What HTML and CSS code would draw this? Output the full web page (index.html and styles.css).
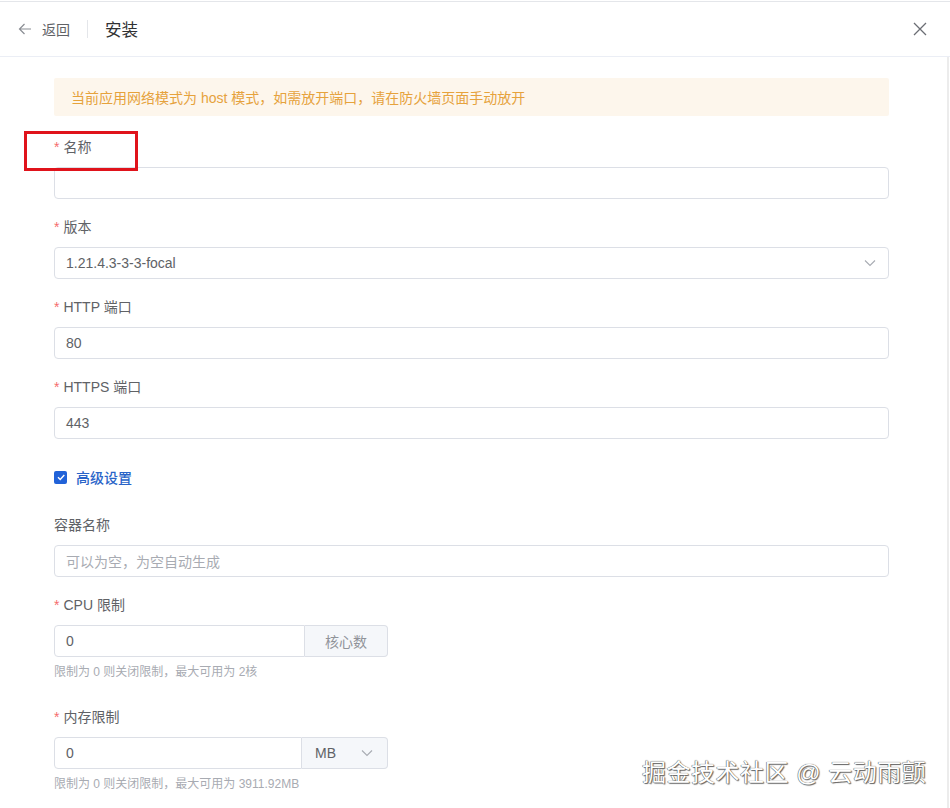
FILE: index.html
```html
<!DOCTYPE html>
<html lang="zh-CN">
<head>
<meta charset="utf-8">
<title>安装</title>
<link rel="stylesheet" href="styles.css">
</head>
<body>
<div class="drawer">
  <header class="head">
    <div class="back">
      <svg class="back-icon" viewBox="0 0 14 14" width="14" height="14"><path d="M13 7H1.5M6.5 2L1.5 7l5 5" fill="none" stroke="#8a8d93" stroke-width="1.2"/></svg>
      <span>返回</span>
    </div>
    <span class="divider"></span>
    <span class="title">安装</span>
    <svg class="close" viewBox="0 0 14 14" width="14" height="14"><path d="M1 1l12 12M13 1L1 13" fill="none" stroke="#6b6e74" stroke-width="1.3"/></svg>
  </header>
  <main class="body">
    <div class="form">
      <div class="alert">当前应用网络模式为 host 模式，如需放开端口，请在防火墙页面手动放开</div>

      <div class="item">
        <div class="lbl"><span class="star">*</span>名称</div>
        <div class="input"></div>
      </div>

      <div class="item">
        <div class="lbl"><span class="star">*</span>版本</div>
        <div class="input select"><span>1.21.4.3-3-3-focal</span>
          <svg class="chev" viewBox="0 0 12 8" width="12" height="8"><path d="M1 1.5l5 5 5-5" fill="none" stroke="#a8abb2" stroke-width="1.1"/></svg>
        </div>
      </div>

      <div class="item">
        <div class="lbl"><span class="star">*</span>HTTP 端口</div>
        <div class="input">80</div>
      </div>

      <div class="item">
        <div class="lbl"><span class="star">*</span>HTTPS 端口</div>
        <div class="input">443</div>
      </div>

      <div class="check-row">
        <span class="checkbox"><svg viewBox="0 0 12 12" width="12" height="12"><path d="M3 6.2l2.2 2.2L9.3 4" fill="none" stroke="#fff" stroke-width="1.4"/></svg></span>
        <span class="check-label">高级设置</span>
      </div>

      <div class="item item-plain">
        <div class="lbl">容器名称</div>
        <div class="input placeholder">可以为空，为空自动生成</div>
      </div>

      <div class="item item-help">
        <div class="lbl"><span class="star">*</span>CPU 限制</div>
        <div class="group">
          <div class="input grp-input">0</div>
          <div class="append">核心数</div>
        </div>
        <div class="help">限制为 0 则关闭限制，最大可用为 2核</div>
      </div>

      <div class="item item-help">
        <div class="lbl"><span class="star">*</span>内存限制</div>
        <div class="group">
          <div class="input grp-input">0</div>
          <div class="append append-select"><span>MB</span>
            <svg class="chev" viewBox="0 0 12 8" width="12" height="8"><path d="M1 1.5l5 5 5-5" fill="none" stroke="#a8abb2" stroke-width="1.1"/></svg>
          </div>
        </div>
        <div class="help">限制为 0 则关闭限制，最大可用为 3911.92MB</div>
      </div>
    </div>
  </main>
  <div class="annot"></div>
  <div class="watermark">掘金技术社区 @ 云动雨颤</div>
</div>
</body>
</html>
```

FILE: styles.css
```css
* { box-sizing: border-box; }
html, body { margin: 0; padding: 0; background: #fff; }
body {
  font-family: "Liberation Sans", "Noto Sans CJK SC", sans-serif;
  color: #606266;
  font-size: 14px;
}
.drawer {
  position: relative;
  width: 950px;
  height: 808px;
  margin-top: 1px;
  border-top: 1px solid #e4e6ea;
  overflow: hidden;
}
.head {
  height: 55px;
  border-bottom: 1px solid #ebeef5;
  display: flex;
  align-items: center;
  padding: 0 0 0 18px;
}
.back {
  display: flex;
  align-items: center;
  gap: 10px;
  font-size: 14px;
  color: #606266;
}
.back-icon { display: block; }
.divider {
  width: 1px;
  height: 18px;
  background: #e4e6ea;
  margin: 0 17px 0 17px;
}
.title {
  font-size: 16.5px;
  color: #303133;
}
.close {
  margin-left: auto;
  margin-right: 23px;
  display: block;
}
.body {
  height: 751px;
  width: 949px;
  border-right: 2px solid #ececec;
}
.form {
  width: 835px;
  margin-left: 54px;
  padding-top: 21px;
}
.alert {
  height: 38px;
  background: #fdf6ec;
  color: #e6a23c;
  font-size: 14px;
  display: flex;
  align-items: center;
  padding-left: 17px;
  border-radius: 2px;
  margin-bottom: 16px;
}
.item { margin-bottom: 13px; }
.lbl {
  height: 30px;
  line-height: 30px;
  font-size: 14px;
  color: #606266;
  margin-bottom: 5px;
}
.star {
  color: #f56c6c;
  margin-right: 4px;
}
.input {
  height: 32px;
  border: 1px solid #dcdfe6;
  border-radius: 4px;
  padding: 0 11px;
  display: flex;
  align-items: center;
  font-size: 14px;
  color: #606266;
  background: #fff;
}
.select { justify-content: space-between; padding-right: 12px; }
.chev { display: block; }
.placeholder { color: #a8abb2; }
.check-row {
  height: 32px;
  margin-top: 22px;
  display: flex;
  align-items: center;
  gap: 9px;
}
.checkbox {
  width: 13px;
  height: 13px;
  border-radius: 2px;
  background: #2162d8;
  display: flex;
  align-items: center;
  justify-content: center;
}
.checkbox svg { display: block; }
.check-label {
  color: #2a64c8;
  font-weight: 500;
  font-size: 14px;
}
.item-plain { margin-top: 17px; }
.group {
  display: flex;
  width: 334px;
  height: 32px;
}
.grp-input {
  flex: 1;
  border-radius: 4px 0 0 4px;
}
.append {
  width: 83px;
  height: 32px;
  border: 1px solid #dcdfe6;
  border-left: 0;
  border-radius: 0 4px 4px 0;
  background: #f5f7fa;
  color: #909399;
  display: flex;
  align-items: center;
  justify-content: center;
  font-size: 14px;
}
.append-select {
  width: 86px;
  justify-content: space-between;
  padding: 0 14px 0 13px;
  color: #606266;
}
.help {
  margin-top: 5px;
  height: 20px;
  line-height: 20px;
  font-size: 12px;
  color: #a8abb2;
}
.item-help { margin-bottom: 20px; }
.annot {
  position: absolute;
  left: 24px;
  top: 129px;
  width: 114px;
  height: 40px;
  border: 3px solid #e0131b;
}
.watermark {
  position: absolute;
  left: 642px;
  top: 754px;
  font-size: 24px;
  line-height: 34px;
  color: #fff;
  letter-spacing: 0.5px;
  text-shadow: 0 0 1px #444, 1px 1px 1px #666, -0.5px -0.5px 0 #999;
  white-space: nowrap;
}
```
